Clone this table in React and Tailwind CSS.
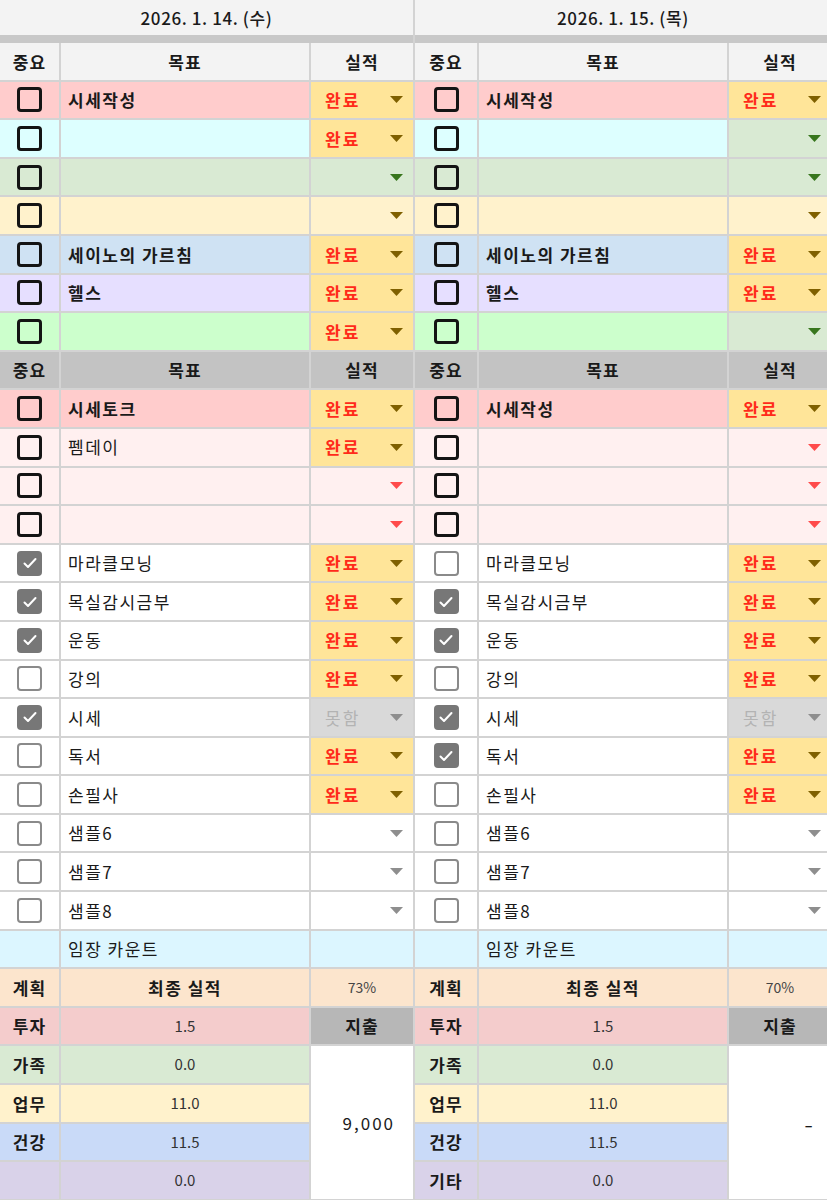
import React from 'react'

const TRI = { olive: '#7f6000', green: '#38761d', red: '#ff4b4b', gray: '#8e8e8e' }

const dayA = {
  date: '2026. 1. 14. (수)',
  cols: 'grid-cols-[59px_248px_102px]',
  top: [
    { bg: 'bg-[#ffcccc]', text: '시세작성', bold: true, st: 'done' },
    { bg: 'bg-[#ddffff]', st: 'done' },
    { bg: 'bg-[#d9ead3]', st: 'green' },
    { bg: 'bg-[#fff2cc]', st: 'olive' },
    { bg: 'bg-[#cfe2f3]', text: '세이노의 가르침', bold: true, st: 'done' },
    { bg: 'bg-[#e6dfff]', text: '헬스', bold: true, st: 'done' },
    { bg: 'bg-[#ccffcc]', st: 'done' },
  ],
  mid: [
    { bg: 'bg-[#ffcccc]', text: '시세토크', bold: true, st: 'done' },
    { bg: 'bg-[#fff0f0]', text: '펨데이', st: 'done' },
    { bg: 'bg-[#fff0f0]', st: 'red' },
    { bg: 'bg-[#fff0f0]', st: 'red' },
  ],
  habits: [
    ['마라클모닝', true, 'done'],
    ['목실감시금부', true, 'done'],
    ['운동', true, 'done'],
    ['강의', false, 'done'],
    ['시세', true, 'fail'],
    ['독서', false, 'done'],
    ['손필사', false, 'done'],
    ['샘플6', false, 'gray'],
    ['샘플7', false, 'gray'],
    ['샘플8', false, 'gray'],
  ],
  rate: '73%',
  spend: '9,000',
  spendCls: 'text-[17px] tracking-[2px]',
  lastLabel: '',
}

const dayB = {
  date: '2026. 1. 15. (목)',
  cols: 'grid-cols-[62px_248px_102px]',
  top: [
    { bg: 'bg-[#ffcccc]', text: '시세작성', bold: true, st: 'done' },
    { bg: 'bg-[#ddffff]', st: 'green' },
    { bg: 'bg-[#d9ead3]', st: 'green' },
    { bg: 'bg-[#fff2cc]', st: 'olive' },
    { bg: 'bg-[#cfe2f3]', text: '세이노의 가르침', bold: true, st: 'done' },
    { bg: 'bg-[#e6dfff]', text: '헬스', bold: true, st: 'done' },
    { bg: 'bg-[#ccffcc]', st: 'green' },
  ],
  mid: [
    { bg: 'bg-[#ffcccc]', text: '시세작성', bold: true, st: 'done' },
    { bg: 'bg-[#fff0f0]', st: 'red' },
    { bg: 'bg-[#fff0f0]', st: 'red' },
    { bg: 'bg-[#fff0f0]', st: 'red' },
  ],
  habits: [
    ['마라클모닝', false, 'done'],
    ['목실감시금부', true, 'done'],
    ['운동', true, 'done'],
    ['강의', false, 'done'],
    ['시세', true, 'fail'],
    ['독서', true, 'done'],
    ['손필사', false, 'done'],
    ['샘플6', false, 'gray'],
    ['샘플7', false, 'gray'],
    ['샘플8', false, 'gray'],
  ],
  rate: '70%',
  spend: '-',
  spendCls: 'text-[26px] font-light',
  lastLabel: '기타',
}

function Tri({ color }) {
  return (
    <svg width="13" height="7" viewBox="0 0 13 7">
      <path d="M0 0h13L6.5 7z" fill={color} />
    </svg>
  )
}

function BlackBox() {
  return <div className="w-[25px] h-[25px] rounded-[4px] border-[3px] border-[#141414]" />
}

function GrayBox({ on }) {
  if (!on) return <div className="w-[25px] h-[25px] rounded-[4px] border-[2.5px] border-[#8a8a8a] bg-white" />
  return (
    <div className="w-[25px] h-[25px] rounded-[4px] bg-[#777777] flex items-center justify-center">
      <svg width="16" height="16" viewBox="0 0 16 16">
        <path d="M2.5 8.5l3.5 3.5 7.5-8" stroke="#fff" strokeWidth="2" fill="none" strokeLinecap="round" strokeLinejoin="round" />
      </svg>
    </div>
  )
}

// status cell: done / fail / empty dropdown of a given colour
function Status({ st, bg }) {
  if (st === 'done')
    return (
      <div className="bg-[#ffe599] flex items-center justify-between pl-[14px] pr-[10px]">
        <span className="text-[#ff2a1a] font-bold tracking-[2px]">완료</span>
        <Tri color={TRI.olive} />
      </div>
    )
  if (st === 'fail')
    return (
      <div className="bg-[#d9d9d9] flex items-center justify-between pl-[14px] pr-[10px]">
        <span className="text-[#b3b3b3] tracking-[2px]">못함</span>
        <Tri color={TRI.gray} />
      </div>
    )
  const cellBg = st === 'green' ? 'bg-[#d9ead3]' : bg
  return (
    <div className={`${cellBg} flex items-center justify-end pr-[10px]`}>
      <Tri color={TRI[st]} />
    </div>
  )
}

function HeadRow({ bg }) {
  return (
    <>
      <div className={`${bg} flex items-center justify-center font-bold tracking-[1px]`}>중요</div>
      <div className={`${bg} flex items-center justify-center font-bold tracking-[1px]`}>목표</div>
      <div className={`${bg} flex items-center justify-center font-bold tracking-[1px]`}>실적</div>
    </>
  )
}

function GoalRow({ row }) {
  return (
    <>
      <div className={`${row.bg} flex items-center justify-center`}>
        <BlackBox />
      </div>
      <div className={`${row.bg} flex items-center pl-[7px] tracking-[1.5px] ${row.bold ? 'font-bold' : ''}`}>
        {row.text}
      </div>
      <Status st={row.st} bg={row.bg} />
    </>
  )
}

function Day({ day }) {
  const sums = [
    ['가족', '0.0', 'bg-[#d9ead3]'],
    ['업무', '11.0', 'bg-[#fff2cc]'],
    ['건강', '11.5', 'bg-[#c9daf8]'],
    [day.lastLabel, '0.0', 'bg-[#d9d2e9]'],
  ]
  return (
    <div className="flex flex-col shrink-0">
      <div className="h-[35px] bg-[#f3f3f3] flex items-center justify-center font-medium tracking-[0.6px]">
        {day.date}
      </div>
      <div className="h-[8px] bg-[#c8c8c8]" />
      <div className={`grid ${day.cols} auto-rows-[36.6px] gap-[2px] bg-[#d3d3d3]`}>
        <HeadRow bg="bg-[#f3f3f3]" />
        {day.top.map((r, i) => (
          <GoalRow key={'t' + i} row={r} />
        ))}
        <HeadRow bg="bg-[#c3c3c3]" />
        {day.mid.map((r, i) => (
          <GoalRow key={'m' + i} row={r} />
        ))}
        {day.habits.map(([name, on, st]) => (
          <React.Fragment key={name}>
            <div className="bg-white flex items-center justify-center">
              <GrayBox on={on} />
            </div>
            <div className="bg-white flex items-center pl-[7px] tracking-[1.5px]">{name}</div>
            <Status st={st} bg="bg-white" />
          </React.Fragment>
        ))}

        <div className="bg-[#dcf6ff]" />
        <div className="bg-[#dcf6ff] flex items-center pl-[7px] tracking-[1.5px]">임장 카운트</div>
        <div className="bg-[#dcf6ff]" />

        <div className="bg-[#fce5cd] flex items-center justify-center font-bold tracking-[1px]">계획</div>
        <div className="bg-[#fce5cd] flex items-center justify-center font-bold tracking-[1.5px]">최종 실적</div>
        <div className="bg-[#fce5cd] flex items-center justify-center text-[14px] text-[#444]">{day.rate}</div>

        <div className="bg-[#f4cccc] flex items-center justify-center font-bold tracking-[1px]">투자</div>
        <div className="bg-[#f4cccc] flex items-center justify-center text-[15px] text-[#333]">1.5</div>
        <div className="bg-[#b7b7b7] flex items-center justify-center font-bold tracking-[1px]">지출</div>

        {sums.map(([label, val, bg], i) => (
          <React.Fragment key={i}>
            <div className={`${bg} flex items-center justify-center font-bold tracking-[1px]`}>{label}</div>
            <div className={`${bg} flex items-center justify-center text-[15px] text-[#333]`}>{val}</div>
            {i === 0 && (
              <div className={`row-span-4 bg-white flex items-center justify-end pr-[18px] ${day.spendCls}`}>
                {day.spend}
              </div>
            )}
          </React.Fragment>
        ))}
      </div>
    </div>
  )
}

export default function App() {
  return (
    <div className="w-[827px] h-[1200px] overflow-hidden bg-[#d3d3d3] text-[17px] text-[#1a1a1a] font-['Noto_Sans_CJK_KR',sans-serif]">
      <div className="flex gap-[2px]">
        <Day day={dayA} />
        <Day day={dayB} />
      </div>
    </div>
  )
}
